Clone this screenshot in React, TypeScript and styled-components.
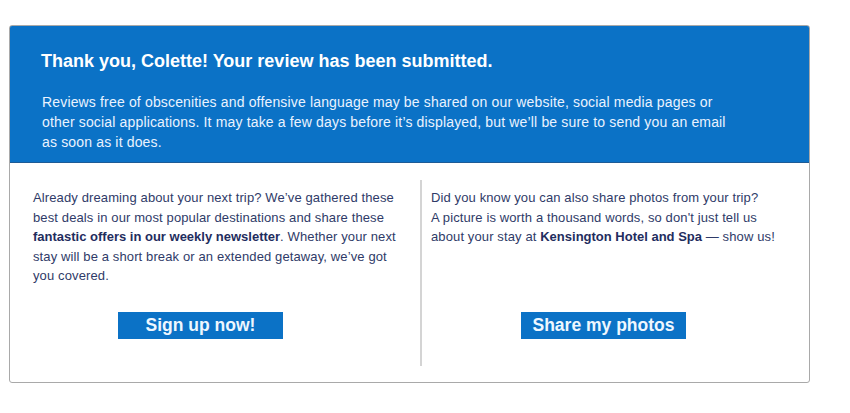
import React from "react";
import styled, { createGlobalStyle } from "styled-components";

const Global = createGlobalStyle`
  html, body { margin: 0; padding: 0; background: #ffffff; }
  body { font-family: "Liberation Sans", Arial, Helvetica, sans-serif; }
`;

const Page = styled.div`
  padding: 25px 0 0 9px;
`;

const Card = styled.div`
  width: 801px;
  height: 358px;
  box-sizing: border-box;
  border: 1px solid #a9a9a9;
  border-radius: 3px;
  display: flex;
  flex-direction: column;
  overflow: hidden;
`;

const Header = styled.div`
  height: 138px;
  box-sizing: border-box;
  margin: -1px -1px 0 -1px;
  background: #0b72c6;
  border: 1px solid #1d5b96;
  border-radius: 3px 3px 0 0;
  padding: 23px 32px 0 31px;
  color: #ffffff;
`;

const Title = styled.h1`
  margin: 0;
  font-size: 18px;
  font-weight: bold;
  line-height: 24px;
  color: #ffffff;
`;

const Intro = styled.p`
  margin: 19px 0 0 1px;
  font-size: 14px;
  letter-spacing: 0.16px;
  line-height: 20px;
  color: #eaf3ff;
  white-space: nowrap;
`;

const Body = styled.div`
  flex: 1;
  display: grid;
  grid-template-columns: 410px 1fr;
  padding: 17px 0 16px 0;
`;

const Column = styled.div<{ $divider?: boolean }>`
  display: flex;
  flex-direction: column;
  justify-content: space-between;
  padding: ${(p) => (p.$divider ? "8px 20px 0 9px" : "8px 10px 0 23px")};
  border-left: ${(p) => (p.$divider ? "2px solid #d4d4d4" : "none")};
`;

const Text = styled.p`
  margin: 0;
  font-size: 13px;
  letter-spacing: 0.12px;
  line-height: 19.5px;
  color: #2f3b68;
  white-space: nowrap;
`;

const Strong = styled.b`
  color: #1f2d5e;
  letter-spacing: 0;
`;

const ButtonRow = styled.div<{ $offset: number }>`
  display: flex;
  padding-left: ${(p) => p.$offset}px;
  padding-bottom: 27px;
`;

const Button = styled.a`
  display: flex;
  align-items: center;
  justify-content: center;
  width: 165px;
  height: 27px;
  background: #0b72c6;
  color: #eef7ff;
  font-size: 17.5px;
  font-weight: bold;
  text-decoration: none;
  cursor: pointer;
`;

export default function App() {
  return (
    <Page>
      <Global />
      <Card>
        <Header>
          <Title>Thank you, Colette! Your review has been submitted.</Title>
          <Intro>
            Reviews free of obscenities and offensive language may be shared on our website, social media pages or
            <br />
            other social applications. It may take a few days before it’s displayed, but we’ll be sure to send you an email
            <br />
            as soon as it does.
          </Intro>
        </Header>
        <Body>
          <Column>
            <Text>
              Already dreaming about your next trip? We’ve gathered these
              <br />
              best deals in our most popular destinations and share these
              <br />
              <Strong>fantastic offers in our weekly newsletter</Strong>. Whether your next
              <br />
              stay will be a short break or an extended getaway, we’ve got
              <br />
              you covered.
            </Text>
            <ButtonRow $offset={85}>
              <Button>Sign up now!</Button>
            </ButtonRow>
          </Column>
          <Column $divider>
            <Text>
              Did you know you can also share photos from your trip?
              <br />
              A picture is worth a thousand words, so don't just tell us
              <br />
              about your stay at <Strong>Kensington Hotel and Spa</Strong> — show us!
            </Text>
            <ButtonRow $offset={90}>
              <Button>Share my photos</Button>
            </ButtonRow>
          </Column>
        </Body>
      </Card>
    </Page>
  );
}
